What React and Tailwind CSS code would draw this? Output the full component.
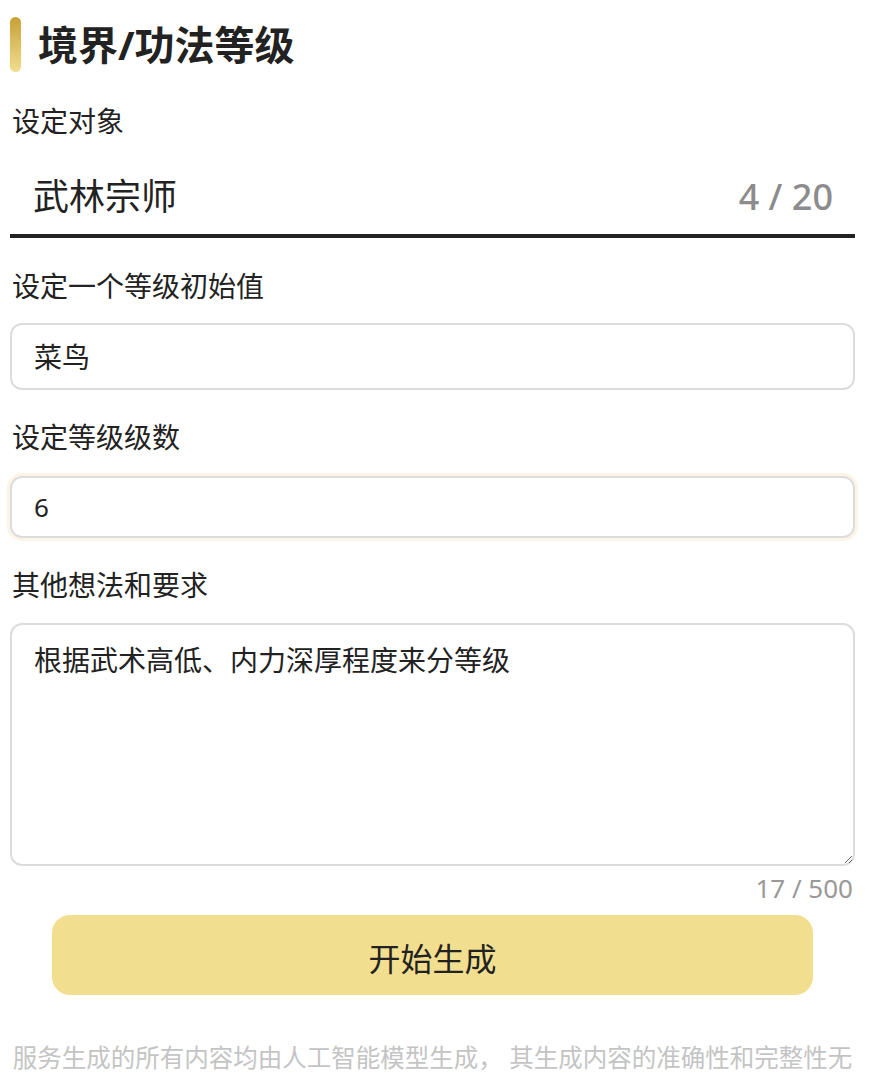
export default function App() {
  return (
    <div className="min-h-[1077px] bg-white pl-[10px] pr-[24px] font-['Noto_Sans','Noto_Sans_CJK_SC',sans-serif] text-[#222]">
      <div className="pt-[17px] flex items-center h-[72px]">
        <div className="w-[11px] h-[55px] rounded-full bg-gradient-to-b from-[#c7a033] to-[#f2de8e]" />
        <h1 className="ml-[17px] text-[40px] leading-[55px] font-bold text-[#222]">境界/功法等级</h1>
      </div>

      <div className="mt-[29px] h-[40px] flex items-center pl-[2px] text-[28px] leading-[40px]">设定对象</div>
      <div className="h-[97px] pt-[19px] border-b-4 border-[#222] flex items-center pl-[23px] pr-[22px]">
        <span className="flex-1 text-[36px] leading-[48px]">武林宗师</span>
        <span className="text-[36px] leading-[48px] font-medium text-[#8c8c8c]">4 / 20</span>
      </div>

      <div className="mt-[28px] h-[40px] flex items-center pl-[2px] text-[28px] leading-[40px]">设定一个等级初始值</div>
      <div className="mt-[17px] h-[67px] rounded-[12px] border-2 border-[#dcdcdc] flex items-center pl-[22px] text-[28px] leading-[40px]">
        菜鸟
      </div>

      <div className="mt-[27px] h-[40px] flex items-center pl-[2px] text-[28px] leading-[40px]">设定等级级数</div>
      <div className="mt-[19px] h-[62px] rounded-[12px] border-2 border-[#dcdcdc] ring-[3px] ring-[#fcf4e4] flex items-center pl-[22px] text-[26px] leading-[40px]">
        6
      </div>

      <div className="mt-[27px] h-[40px] flex items-center pl-[2px] text-[28px] leading-[40px]">其他想法和要求</div>
      <textarea
        className="mt-[18px] block w-full h-[243px] rounded-[12px] border-2 border-[#dcdcdc] pl-[22px] pr-[22px] pt-[15px] text-[28px] leading-[40px] text-[#222] outline-none font-['Noto_Sans','Noto_Sans_CJK_SC',sans-serif]"
        defaultValue="根据武术高低、内力深厚程度来分等级"
      />
      <div className="mt-[7px] h-[30px] flex items-center justify-end pr-[2px] text-[26px] leading-[30px] text-[#999]">17 / 500</div>

      <div className="mt-[12px] mx-[42px] h-[80px] pt-[8px] rounded-[18px] bg-[#f2de8f] flex items-center justify-center text-[32px] leading-[44px] text-[#222]">
        开始生成
      </div>

      <p className="mt-[45px] text-center text-[24.5px] leading-[36px] text-[#c4c4c4]">
        服务生成的所有内容均由人工智能模型生成， 其生成内容的准确性和完整性无法保证，不代表我们的态度或观点。
      </p>
    </div>
  );
}
